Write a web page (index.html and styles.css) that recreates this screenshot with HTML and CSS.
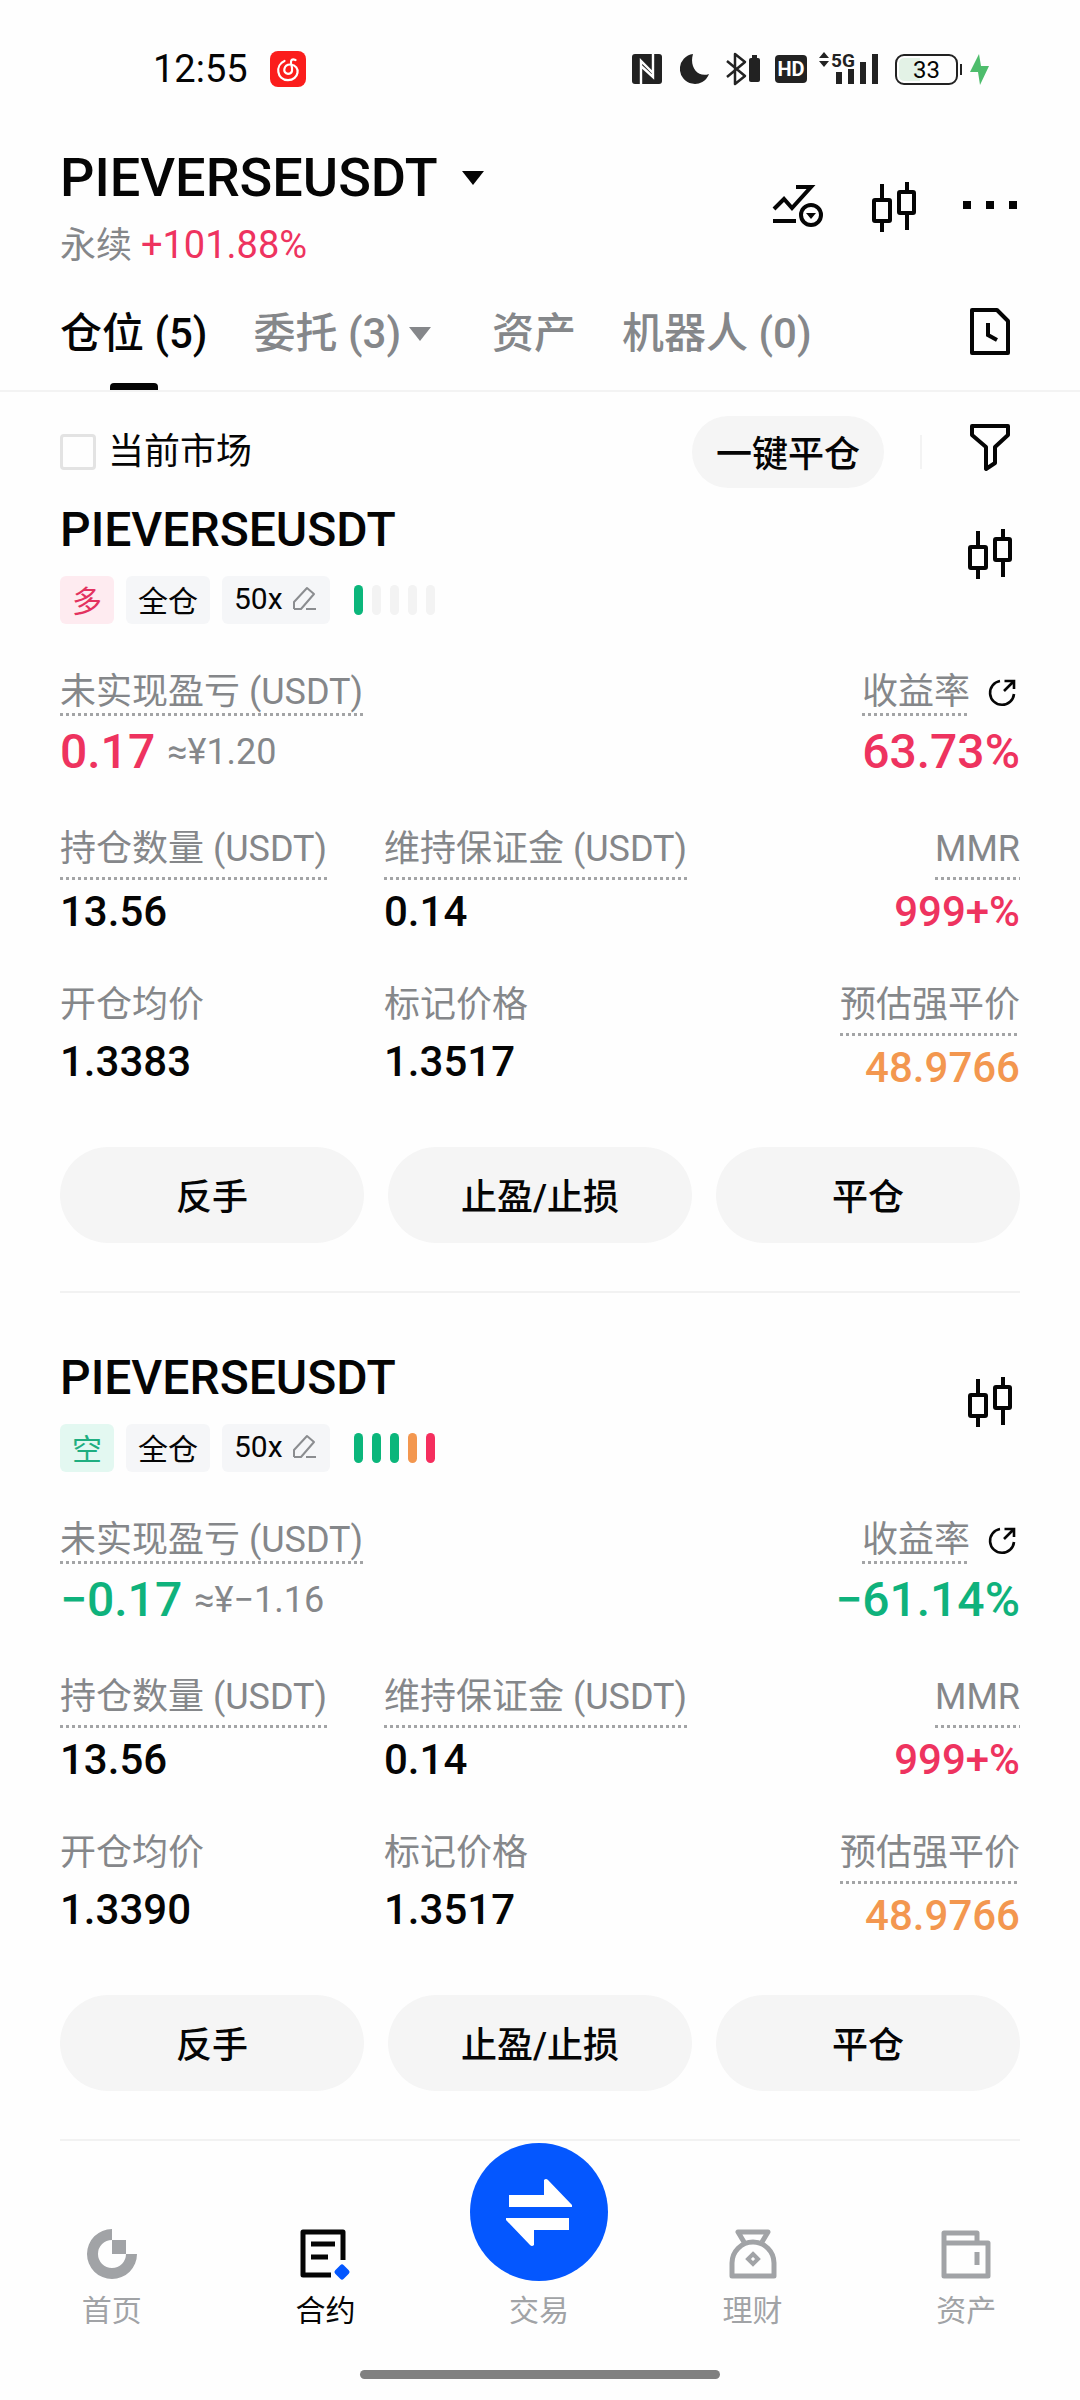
FILE: index.html
```html
<!DOCTYPE html>
<html lang="zh-CN">
<head>
    <meta charset="UTF-8">
    <meta name="viewport" content="width=device-width, initial-scale=1.0">
    <title>PIEVERSEUSDT 永续</title>
    <link rel="stylesheet" href="styles.css">
</head>
<body>

    <!-- shared icons -->
    <svg class="sprite" aria-hidden="true">
        <symbol id="i-candles" viewBox="0 0 60 60">
            <path d="M18 7v16M18 43v12M43 5v11M43 36v17" fill="none" stroke="#050505" stroke-width="4"/>
            <rect x="10" y="23" width="16" height="21" rx="1" fill="none" stroke="#050505" stroke-width="4"/>
            <rect x="35" y="15" width="15" height="21" rx="1" fill="none" stroke="#050505" stroke-width="4"/>
        </symbol>
        <symbol id="i-edit" viewBox="0 0 26 26">
            <path d="M2 23v-7L15 2l7 6L9 23H2" fill="none" stroke="#8b8d90" stroke-width="2" stroke-linejoin="round"/>
            <path d="M14 23h10" stroke="#8b8d90" stroke-width="2"/>
        </symbol>
        <symbol id="i-share" viewBox="0 0 30 30">
            <path d="M13 3A12 12 0 1 0 27 16" fill="none" stroke="#050505" stroke-width="2.6"/>
            <path d="M17 13l9-9M17.500 3H27v8" fill="none" stroke="#050505" stroke-width="2.6"/>
        </symbol>
    </svg>

    <div class="status-bar">
        <div class="status-left">
            <span class="time">12:55</span>
            <svg width="36" height="36" viewBox="0 0 36 36">
                <rect width="36" height="36" rx="8" fill="#fb1d1c"/>
                <path d="M14.500 10C5 14 6.500 29 18 29.200c11 0 13.500-14.700 2.500-15.700-7-.3-8.500 9-2.500 9.300 5 0 4.500-5 3.500-8.300-1.200-4-.8-7.500 4-5.500" fill="none" stroke="#fff" stroke-width="2.200" stroke-linecap="round"/>
            </svg>
        </div>
        <div class="status-right">
            <svg class="nfc" width="30" height="30" viewBox="0 0 30 30">
                <rect width="30" height="30" rx="3" fill="#222"/>
                <path d="M9 30V7l12 12M21 0v23L9 12" fill="none" stroke="#fff" stroke-width="2.400"/>
            </svg>
            <svg class="moon" width="29" height="30" viewBox="0 0 29 30">
                <path d="M13 0A15 15 0 1 0 29 20C18 24 9 13 13 0z" fill="#222"/>
            </svg>
            <svg class="bluetooth" width="34" height="34" viewBox="0 0 34 34">
                <path d="M1 9l18 15-10 8V2l10 8L1 25" fill="none" stroke="#222" stroke-width="2.500" stroke-linejoin="round"/>
                <rect x="23" y="6" width="11" height="24" rx="2" fill="#222"/>
                <rect x="26" y="3" width="5" height="3" fill="#222"/>
            </svg>
            <span class="hd">HD</span>
            <svg class="signal" width="60" height="42" viewBox="0 0 60 42">
                <path d="M0 10l5-6 5 6zM0 13l5 6 5-6z" fill="#222"/>
                <text x="12" y="19" font-size="19" font-weight="700" fill="#222">5G</text>
                <path d="M17 24h6v12h-6zM29 21h6v15h-6zM41 14h6v22h-6zM53 6h6v30h-6z" fill="#222"/>
            </svg>
            <span class="battery">33</span>
            <svg class="bolt" width="19" height="31" viewBox="0 0 19 31">
                <path d="M9 0L0 18h8l2 13 9-19h-8z" fill="#4ebd6c"/>
            </svg>
        </div>
    </div>

    <header class="header">
        <div class="pair">
            <h1>PIEVERSEUSDT
                <svg width="22" height="14" viewBox="0 0 22 14"><path d="M0 0h22L11 14z" fill="#050505"/></svg>
            </h1>
            <p class="pair-info">永续 <span class="change red">+101.88%</span></p>
        </div>
        <div class="header-icons">
            <button class="icon-button" aria-label="图表交易">
                <svg viewBox="0 0 60 60">
                    <path d="M6 32l10-10 8 9 19-21H28M5 44h23" fill="none" stroke="#050505" stroke-width="4"/>
                    <circle cx="43" cy="38" r="10" fill="none" stroke="#050505" stroke-width="4"/>
                    <path d="M38 36h10l-5 6z" fill="#050505"/>
                </svg>
            </button>
            <button class="icon-button" aria-label="K线"><svg><use href="#i-candles"/></svg></button>
            <button class="icon-button" aria-label="更多">
                <svg viewBox="0 0 60 60"><path d="M3 24h8v8H3zM26 24h8v8h-8zM49 24h8v8h-8z" fill="#050505"/></svg>
            </button>
        </div>
    </header>

    <nav class="tabs">
        <a class="tab active" href="#">仓位 (5)</a>
        <a class="tab has-menu" href="#">委托 (3)
            <svg width="22" height="14" viewBox="0 0 22 14"><path d="M0 0h22L11 14z" fill="#85878a"/></svg>
        </a>
        <a class="tab" href="#">资产</a>
        <a class="tab" href="#">机器人 (0)</a>
        <button class="icon-button history" aria-label="历史">
            <svg viewBox="0 0 60 60">
                <path d="M12 6h25l11 11v32H12z" fill="none" stroke="#050505" stroke-width="4" stroke-linejoin="round"/>
                <path d="M28 19v12l9 5" fill="none" stroke="#050505" stroke-width="4"/>
            </svg>
        </button>
    </nav>

    <div class="filter-row">
        <label class="market"><input type="checkbox"> 当前市场</label>
        <button class="close-all">一键平仓</button>
        <span class="divider"></span>
        <button class="icon-button" aria-label="筛选">
            <svg viewBox="0 0 60 60">
                <path d="M12 4h36v9L35 25v16l-9 6V25L12 13z" fill="none" stroke="#050505" stroke-width="4" stroke-linejoin="round"/>
            </svg>
        </button>
    </div>

    <main class="positions">
        <section class="position">
            <div class="position-head">
                <div>
                    <h2>PIEVERSEUSDT</h2>
                    <div class="tags">
                        <span class="tag long">多</span>
                        <span class="tag">全仓</span>
                        <button class="tag">50x <svg width="26" height="26"><use href="#i-edit"/></svg></button>
                        <div class="risk"><i class="low"></i><i></i><i></i><i></i><i></i></div>
                    </div>
                </div>
                <button class="icon-button" aria-label="K线"><svg><use href="#i-candles"/></svg></button>
            </div>
            <div class="summary">
                <div>
                    <span class="label dotted">未实现盈亏 (USDT)</span>
                    <p class="big amount red">0.17 <small>≈¥1.20</small></p>
                </div>
                <div class="right">
                    <div class="rate"><span class="label dotted">收益率</span><svg width="30" height="30"><use href="#i-share"/></svg></div>
                    <p class="big red">63.73%</p>
                </div>
            </div>
            <div class="details">
                <div><span class="label dotted">持仓数量 (USDT)</span><p>13.56</p></div>
                <div><span class="label dotted">维持保证金 (USDT)</span><p>0.14</p></div>
                <div class="right"><span class="label dotted">MMR</span><p class="red">999+%</p></div>
                <div><span class="label">开仓均价</span><p>1.3383</p></div>
                <div><span class="label">标记价格</span><p>1.3517</p></div>
                <div class="right"><span class="label dotted">预估强平价</span><p class="orange">48.9766</p></div>
            </div>
            <div class="actions">
                <button>反手</button>
                <button>止盈/止损</button>
                <button>平仓</button>
            </div>
        </section>

        <section class="position">
            <div class="position-head">
                <div>
                    <h2>PIEVERSEUSDT</h2>
                    <div class="tags">
                        <span class="tag short">空</span>
                        <span class="tag">全仓</span>
                        <button class="tag">50x <svg width="26" height="26"><use href="#i-edit"/></svg></button>
                        <div class="risk"><i class="low"></i><i class="low"></i><i class="low"></i><i class="mid"></i><i class="high"></i></div>
                    </div>
                </div>
                <button class="icon-button" aria-label="K线"><svg><use href="#i-candles"/></svg></button>
            </div>
            <div class="summary">
                <div>
                    <span class="label dotted">未实现盈亏 (USDT)</span>
                    <p class="big amount green">−0.17 <small>≈¥−1.16</small></p>
                </div>
                <div class="right">
                    <div class="rate"><span class="label dotted">收益率</span><svg width="30" height="30"><use href="#i-share"/></svg></div>
                    <p class="big green">−61.14%</p>
                </div>
            </div>
            <div class="details">
                <div><span class="label dotted">持仓数量 (USDT)</span><p>13.56</p></div>
                <div><span class="label dotted">维持保证金 (USDT)</span><p>0.14</p></div>
                <div class="right"><span class="label dotted">MMR</span><p class="red">999+%</p></div>
                <div><span class="label">开仓均价</span><p>1.3390</p></div>
                <div><span class="label">标记价格</span><p>1.3517</p></div>
                <div class="right"><span class="label dotted">预估强平价</span><p class="orange">48.9766</p></div>
            </div>
            <div class="actions">
                <button>反手</button>
                <button>止盈/止损</button>
                <button>平仓</button>
            </div>
        </section>
    </main>

    <nav class="bottom-nav">
        <a href="#">
            <svg width="52" height="52" viewBox="0 0 52 52">
                <path d="M26 0v11a14 14 0 1 0 14 14h11A25 25 0 1 1 26 0z" fill="#a1a3a6"/>
                <path d="M26 11h14v14H26z" fill="#a1a3a6"/>
            </svg>
            首页
        </a>
        <a class="active" href="#">
            <svg width="52" height="52" viewBox="0 0 52 52">
                <path d="M32 46H4V3h40v28" fill="none" stroke="#050505" stroke-width="5" stroke-linejoin="round"/>
                <path d="M12 15h24M12 28h17" stroke="#050505" stroke-width="5"/>
                <path d="M43 38l5 5-5 5-5-5z" fill="#0457ff" stroke="#0457ff" stroke-width="5" stroke-linejoin="round"/>
            </svg>
            合约
        </a>
        <a href="#">
            <svg width="138" height="138" viewBox="0 0 138 138">
                <circle cx="69" cy="69" r="69" fill="#0457ff"/>
                <path d="M39 52h35V37q2-2 4 0l24 25v2H39z" fill="#fff"/>
                <path d="M99 75v12H64v15q-2 2-4 0L36 77v-2z" fill="#fff"/>
            </svg>
            交易
        </a>
        <a href="#">
            <svg width="52" height="52" viewBox="0 0 52 52">
                <path d="M17 13L11 3h30l-6 10" fill="none" stroke="#a1a3a6" stroke-width="5" stroke-linejoin="round"/>
                <path d="M5 47V34a21 21 0 0 1 42 0v13z" fill="none" stroke="#a1a3a6" stroke-width="5" stroke-linejoin="round"/>
                <path d="M26 25l5 5-5 5-5-5z" fill="none" stroke="#a1a3a6" stroke-width="4"/>
            </svg>
            理财
        </a>
        <a href="#">
            <svg width="52" height="52" viewBox="0 0 52 52">
                <path d="M4 14V4h33v10M4 14h44v33H4z" fill="none" stroke="#a1a3a6" stroke-width="5" stroke-linejoin="round"/>
                <path d="M37 23v13" stroke="#a1a3a6" stroke-width="5"/>
            </svg>
            资产
        </a>
    </nav>
    <div class="home-bar"></div>

</body>
</html>
```

FILE: styles.css
```css
* {
    box-sizing: border-box;
}
body {
    margin: 0;
    font-family: Roboto, "Noto Sans CJK SC", sans-serif;
    background-color: #fefefe;
    color: #050505;
}
h1, h2, p {
    margin: 0;
    font-weight: 500;
}
a {
    color: inherit;
    text-decoration: none;
}
button {
    padding: 0;
    border: none;
    background: none;
    color: inherit;
    font-family: inherit;
}
svg {
    flex: none;
}
.sprite {
    display: none;
}
.red {
    color: #ee335f;
}
.green {
    color: #0fb27c;
}
.orange {
    color: #f3974f;
}
.icon-button {
    flex: none;
    width: 60px;
    height: 60px;
}
.icon-button svg {
    display: block;
    width: 60px;
    height: 60px;
}

/* status bar */
.status-bar {
    display: flex;
    justify-content: space-between;
    padding: 48px 91px 0 153px;
}
.status-left, .status-right {
    display: flex;
    align-items: center;
    height: 42px;
}
.status-left {
    gap: 22px;
}
.time {
    font-size: 38px;
}
.nfc {
    margin-right: 18px;
}
.moon {
    margin-right: 17px;
}
.bluetooth {
    margin-right: 15px;
}
.hd {
    width: 32px;
    margin-right: 12px;
    border-radius: 4px;
    background-color: #222;
    color: #fff;
    font-size: 20px;
    font-weight: 700;
    line-height: 28px;
    text-align: center;
}
.signal {
    margin-right: 16px;
    overflow: visible;
}
.battery {
    position: relative;
    width: 63px;
    height: 31px;
    margin-right: 12px;
    border: 2px solid #222;
    border-radius: 9px;
    background: linear-gradient(to right, #e3f2e6 21px, transparent 21px);
    background-origin: content-box;
    background-clip: content-box;
    padding: 2px;
    font-size: 24px;
    line-height: 24px;
    text-align: center;
}
.battery::after {
    content: "";
    position: absolute;
    right: -6px;
    top: 8px;
    width: 2px;
    height: 11px;
    background-color: #222;
}

/* header */
.header {
    display: flex;
    justify-content: space-between;
    align-items: center;
    padding: 56px 60px 0;
}
h1 {
    display: flex;
    align-items: center;
    gap: 24px;
    font-size: 54px;
    line-height: 64px;
}
.pair-info {
    margin-top: 14px;
    color: #85878a;
    font-size: 36px;
    font-weight: 400;
    line-height: 44px;
}
.change {
    font-size: 38px;
    line-height: 1;
}
.header-icons {
    display: flex;
    gap: 36px;
}

/* tabs */
.tabs {
    display: flex;
    gap: 46px;
    padding: 36px 60px 0;
    border-bottom: 2px solid #f3f3f3;
}
.tab {
    position: relative;
    padding-bottom: 26px;
    color: #85878a;
    font-size: 42px;
    font-weight: 500;
    line-height: 60px;
    white-space: nowrap;
}
.tab.active {
    color: #050505;
}
.tab.active::after {
    content: "";
    position: absolute;
    left: 50%;
    bottom: 0;
    width: 48px;
    height: 7px;
    margin-left: -24px;
    border-radius: 4px 4px 0 0;
    background-color: #050505;
}
.tab.has-menu {
    display: flex;
    align-items: center;
    gap: 8px;
    margin-right: 15px;
}
.history {
    margin-left: auto;
}

/* filter */
.filter-row {
    display: flex;
    align-items: center;
    padding: 24px 60px 0;
}
.market {
    display: flex;
    align-items: center;
    gap: 12px;
    margin-right: auto;
    font-size: 36px;
    line-height: 44px;
}
.market input {
    appearance: none;
    width: 36px;
    height: 36px;
    margin: 0;
    border: 3px solid #e3e3e3;
    border-radius: 4px;
}
.close-all {
    width: 192px;
    height: 72px;
    padding-bottom: 3px;
    border-radius: 36px;
    background-color: #f5f5f5;
    font-size: 36px;
    font-weight: 500;
}
.divider {
    width: 2px;
    height: 34px;
    margin: 0 38px 0 36px;
    background-color: #f3f3f3;
}

/* positions */
.positions {
    padding: 0 60px;
}
.position {
    padding: 57px 0 48px;
    border-bottom: 2px solid #f2f2f2;
}
.position:first-child {
    padding-top: 14px;
}
.position-head {
    display: flex;
    justify-content: space-between;
}
.position-head .icon-button {
    margin-top: 22px;
}
h2 {
    font-size: 48px;
    line-height: 56px;
}
.tags {
    display: flex;
    align-items: center;
    gap: 12px;
    margin-top: 18px;
}
.tag {
    display: flex;
    align-items: center;
    gap: 9px;
    height: 48px;
    padding: 0 12px 3px;
    border-radius: 6px;
    background-color: #f5f6f8;
    font-size: 30px;
}
.tag.long {
    background-color: #feebf0;
    color: #e3325f;
}
.tag.short {
    background-color: #e3f8f1;
    color: #1fae80;
}
.risk {
    display: flex;
    gap: 9px;
    margin-left: 12px;
}
.risk i {
    width: 9px;
    height: 30px;
    border-radius: 5px;
    background-color: #f3f3f3;
}
.risk .low {
    background-color: #0bb67b;
}
.risk .mid {
    background-color: #f3974f;
}
.risk .high {
    background-color: #f52e5e;
}
.label {
    display: inline-block;
    vertical-align: top;
    padding-bottom: 3px;
    color: #85878a;
    font-size: 36px;
    line-height: 44px;
    white-space: nowrap;
}
.label.dotted {
    background: repeating-linear-gradient(to right, #a3a4a6 0 3px, transparent 3px 6px) left bottom / 100% 3px no-repeat;
}
.right {
    text-align: right;
}
.summary {
    display: flex;
    justify-content: space-between;
    margin-top: 46px;
}
.summary .label {
    padding-bottom: 2px;
}
.rate {
    display: flex;
    align-items: center;
    justify-content: flex-end;
    gap: 17px;
    padding-right: 3px;
}
.big {
    margin-top: 8px;
    font-size: 48px;
    line-height: 56px;
}
.amount {
    display: flex;
    align-items: center;
    gap: 12px;
}
.amount small {
    color: #85878a;
    font-size: 36px;
    font-weight: 400;
}
.details {
    display: grid;
    grid-template-columns: repeat(3, 1fr);
    gap: 47px 12px;
    margin-top: 47px;
}
.details .dotted {
    padding-bottom: 9px;
}
.details p {
    padding-top: 8px;
    font-size: 42px;
    line-height: 48px;
}
.actions {
    display: grid;
    grid-template-columns: repeat(3, 1fr);
    gap: 24px;
    margin-top: 55px;
}
.actions button {
    height: 96px;
    padding-bottom: 3px;
    border-radius: 48px;
    background-color: #f5f5f5;
    font-size: 36px;
    font-weight: 500;
}

/* bottom nav */
.bottom-nav {
    display: grid;
    grid-template-columns: repeat(5, 1fr);
    align-items: end;
    padding: 2px 7px 0 5px;
}
.bottom-nav a {
    display: flex;
    flex-direction: column;
    align-items: center;
    gap: 12px;
    color: #a1a3a6;
    font-size: 30px;
    line-height: 36px;
}
.bottom-nav .active {
    color: #050505;
}
.home-bar {
    width: 33.333%;
    height: 9px;
    margin: 41px auto 21px;
    border-radius: 5px;
    background-color: #808080;
}
```
